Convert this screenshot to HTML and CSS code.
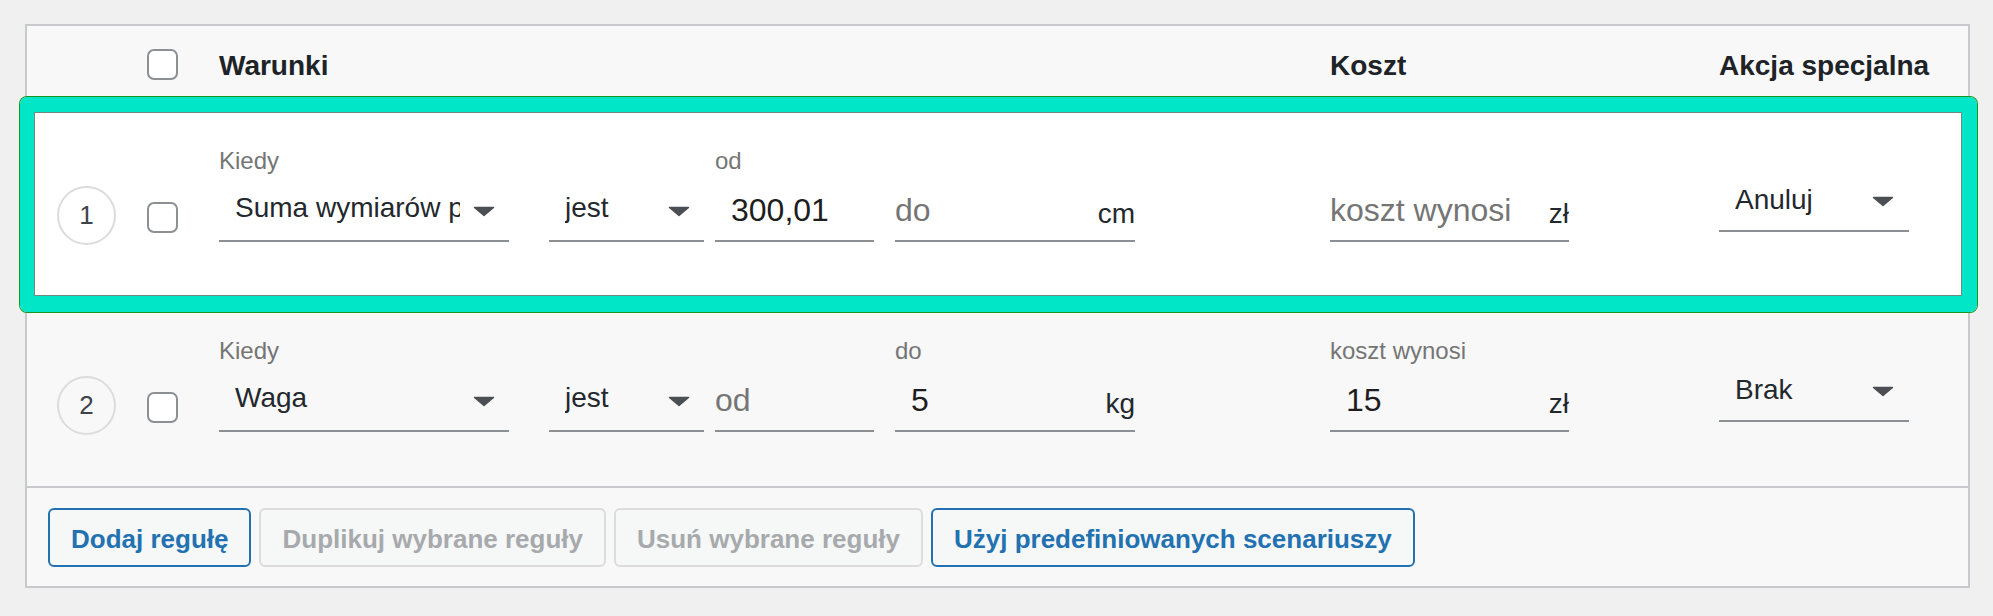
FILE: index.html
```html
<!DOCTYPE html>
<html lang="pl">
<head>
<meta charset="utf-8">
<title>Reguły kosztów</title>
<link rel="stylesheet" href="styles.css">
</head>
<body>
<div class="panel">
  <div class="head">
    <div class="h-num"></div>
    <span class="cb h-cb"></span>
    <div class="h-cond">Warunki</div>
    <div class="h-cost">Koszt</div>
    <div class="h-act">Akcja specjalna</div>
  </div>

  <div class="row row-white">
    <div class="num">1</div>
    <span class="cb row-cb"></span>
    <div class="cell w-when">
      <div class="lbl">Kiedy</div>
      <div class="sel"><span class="sel-text clip">Suma wymiarów paczki</span><svg class="arr" viewBox="0 0 22 11"><polygon points="1.5,1.5 20.5,1.5 11,9.5"/></svg></div>
    </div>
    <div class="cell w-is">
      <div class="lbl"></div>
      <div class="sel"><span class="sel-text">jest</span><svg class="arr" viewBox="0 0 22 11"><polygon points="1.5,1.5 20.5,1.5 11,9.5"/></svg></div>
    </div>
    <div class="cell w-from">
      <div class="lbl">od</div>
      <div class="inp"><span class="val">300,01</span></div>
    </div>
    <div class="cell w-to">
      <div class="lbl"></div>
      <div class="inp"><span class="ph">do</span><span class="unit">cm</span></div>
    </div>
    <div class="cell w-cost">
      <div class="lbl"></div>
      <div class="inp"><span class="ph">koszt wynosi</span><span class="unit">zł</span></div>
    </div>
    <div class="cell-act">
      <div class="sel sel-act"><span class="sel-text">Anuluj</span><svg class="arr" viewBox="0 0 22 11"><polygon points="1.5,1.5 20.5,1.5 11,9.5"/></svg></div>
    </div>
    <div class="hl"></div>
  </div>

  <div class="row row-grey">
    <div class="num">2</div>
    <span class="cb row-cb"></span>
    <div class="cell w-when">
      <div class="lbl">Kiedy</div>
      <div class="sel"><span class="sel-text">Waga</span><svg class="arr" viewBox="0 0 22 11"><polygon points="1.5,1.5 20.5,1.5 11,9.5"/></svg></div>
    </div>
    <div class="cell w-is">
      <div class="lbl"></div>
      <div class="sel"><span class="sel-text">jest</span><svg class="arr" viewBox="0 0 22 11"><polygon points="1.5,1.5 20.5,1.5 11,9.5"/></svg></div>
    </div>
    <div class="cell w-from">
      <div class="lbl"></div>
      <div class="inp"><span class="ph">od</span></div>
    </div>
    <div class="cell w-to">
      <div class="lbl">do</div>
      <div class="inp"><span class="val">5</span><span class="unit">kg</span></div>
    </div>
    <div class="cell w-cost">
      <div class="lbl">koszt wynosi</div>
      <div class="inp"><span class="val">15</span><span class="unit">zł</span></div>
    </div>
    <div class="cell-act">
      <div class="sel sel-act"><span class="sel-text">Brak</span><svg class="arr" viewBox="0 0 22 11"><polygon points="1.5,1.5 20.5,1.5 11,9.5"/></svg></div>
    </div>
  </div>

  <div class="foot">
    <span class="btn btn-primary">Dodaj regułę</span>
    <span class="btn btn-disabled">Duplikuj wybrane reguły</span>
    <span class="btn btn-disabled">Usuń wybrane reguły</span>
    <span class="btn btn-primary">Użyj predefiniowanych scenariuszy</span>
  </div>
</div>
</body>
</html>
```

FILE: styles.css
```css
html, body {
  margin: 0;
  padding: 0;
}

body {
  background: #f0f0f1;
  font-family: "Liberation Sans", Arial, sans-serif;
  color: #1e1e1e;
  width: 1993px;
  height: 616px;
  overflow: hidden;
}

.panel {
  margin: 24px 0 0 25px;
  width: 1945px;
  box-sizing: border-box;
  border: 2px solid #c8c9cc;
  background: #f8f8f8;
}

/* header */
.head {
  display: flex;
  align-items: center;
  height: 81px;
  box-sizing: border-box;
  padding: 0 0 2px 30px;
}

.h-num {
  width: 59px;
  flex: none;
}

.h-cb {
  margin-left: 31px;
  margin-bottom: 3px;
}

.h-cond,
.h-cost,
.h-act {
  font-size: 28px;
  font-weight: bold;
  line-height: 32px;
  color: #1d2327;
  flex: none;
}

.h-cond {
  margin-left: 41px;
  width: 916px;
}

.h-cost {
  margin-left: 195px;
  width: 239px;
}

.h-act {
  margin-left: 150px;
}

/* checkbox */
.cb {
  display: block;
  flex: none;
  width: 31px;
  height: 31px;
  box-sizing: border-box;
  border: 2px solid #8c8f94;
  border-radius: 7px;
  background: #fff;
}

/* rows */
.row {
  display: flex;
  align-items: flex-start;
  height: 190px;
  box-sizing: border-box;
  padding-left: 30px;
}

.row-white {
  position: relative;
  z-index: 1;
  background: #fff;
}

.row-grey {
  height: 189px;
  background: #f8f8f8;
}

.num {
  flex: none;
  width: 59px;
  height: 59px;
  margin-top: 79px;
  box-sizing: border-box;
  border: 2px solid #dcdcde;
  border-radius: 50%;
  font-size: 26px;
  line-height: 55px;
  text-align: center;
  color: #3c434a;
}

.row-cb {
  margin-left: 31px;
  margin-top: 95px;
}

.cell {
  flex: none;
  display: flex;
  flex-direction: column;
  height: 95px;
  margin-top: 40px;
}

.w-when {
  margin-left: 41px;
  width: 290px;
}

.w-is {
  margin-left: 40px;
  width: 155px;
}

.w-from {
  margin-left: 11px;
  width: 159px;
}

.w-to {
  margin-left: 21px;
  width: 240px;
}

.w-cost {
  margin-left: 195px;
  width: 239px;
}

.cell-act {
  flex: none;
  margin-left: 150px;
  width: 190px;
  margin-top: 73px;
}

.lbl {
  height: 28px;
  font-size: 24px;
  line-height: 28px;
  color: #757575;
  white-space: nowrap;
}

/* select */
.sel {
  margin-top: auto;
  display: flex;
  align-items: flex-start;
  padding: 0 14px 12px 16px;
  border-bottom: 2px solid #8c8f94;
  line-height: 40px;
}

.sel-act {
  padding-right: 15px;
  padding-bottom: 10px;
}

.sel-text {
  flex: 1;
  min-width: 0;
  font-size: 28px;
  color: #23282d;
  white-space: nowrap;
  overflow: hidden;
}

.sel-text.clip {
  margin-right: 13px;
}

.arr {
  flex: none;
  width: 22px;
  height: 11px;
  margin-top: 18px;
}

.sel-act .arr {
  margin-top: 16px;
}

.arr polygon {
  fill: #4b4f54;
  stroke: #4b4f54;
  stroke-width: 1.5;
  stroke-linejoin: round;
}

/* input */
.inp {
  margin-top: auto;
  display: flex;
  align-items: flex-end;
  padding-bottom: 10px;
  border-bottom: 2px solid #8c8f94;
}

.val,
.ph {
  font-size: 32px;
  line-height: 40px;
  white-space: nowrap;
}

.val {
  padding-left: 16px;
  color: #1e1e1e;
}

.ph {
  color: #757575;
}

.unit {
  margin-left: auto;
  font-size: 28px;
  line-height: 32px;
  color: #23282d;
}

/* highlight frame */
.hl {
  position: absolute;
  z-index: 2;
  left: -7px;
  top: -10px;
  right: -9px;
  bottom: -15px;
  border-style: solid;
  border-color: #00e6c6;
  border-width: 15px 15px 16px 14px;
  border-radius: 7px;
  box-shadow: 0 0 0 1px #1a931f, inset 0 0 0 1px #6f8a7e;
  pointer-events: none;
}

/* footer */
.foot {
  display: flex;
  gap: 8px;
  border-top: 2px solid #c8c9cc;
  padding: 20px 0 19px 21px;
}

.btn {
  display: block;
  height: 59px;
  box-sizing: border-box;
  padding: 3px 21px 0;
  border: 2px solid;
  border-radius: 6px;
  background: #f6f7f7;
  font-size: 26px;
  font-weight: bold;
  line-height: 52px;
  white-space: nowrap;
}

.btn-primary {
  color: #2271b1;
  border-color: #2271b1;
}

.btn-disabled {
  color: #a7aaad;
  border-color: #dcdcde;
}
```
